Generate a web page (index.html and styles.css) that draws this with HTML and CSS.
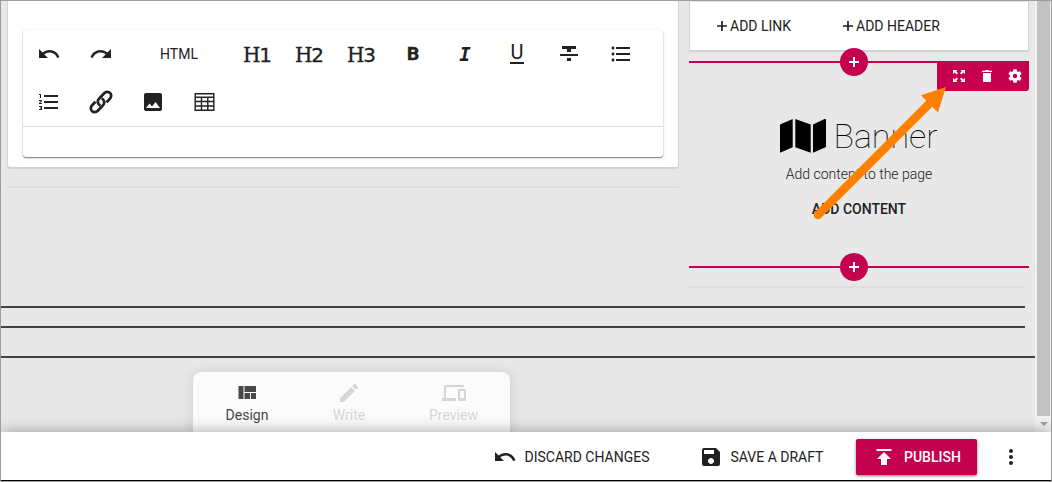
FILE: index.html
```html
<!DOCTYPE html>
<html lang="en">
<head>
<meta charset="utf-8">
<title>Page editor</title>
<link rel="stylesheet" href="styles.css">
</head>
<body>
<div class="frame">
  <div class="workspace">
    <main class="canvas">
      <div class="columns">
        <section class="main-col">
          <div class="card page-card">
            <div class="editor">
              <div class="tools">
                <span class="tool"><svg class="icon" viewBox="0 0 24 24"><path d="M12.5 8c-2.65 0-5.05.99-6.9 2.6L2 7v9h9l-3.620-3.620c1.390-1.160 3.160-1.880 5.120-1.880 3.540 0 6.550 2.310 7.600 5.500l2.370-.78C21.080 11.030 17.150 8 12.500 8z"/></svg></span>
                <span class="tool"><svg class="icon" viewBox="0 0 24 24"><path d="M18.4 10.6C16.550 8.990 14.150 8 11.500 8c-4.650 0-8.580 3.030-9.960 7.220L3.900 16c1.050-3.190 4.050-5.500 7.600-5.500 1.950 0 3.730.72 5.120 1.880L13 16h9V7l-3.600 3.600z"/></svg></span>
                <span class="tool wide">HTML</span>
                <span class="tool heading">H<span class="level">1</span></span>
                <span class="tool heading">H<span class="level">2</span></span>
                <span class="tool heading">H<span class="level">3</span></span>
                <span class="tool bold">B</span>
                <span class="tool italic">I</span>
                <span class="tool"><span class="underline">U</span></span>
                <span class="tool"><svg class="icon" viewBox="0 0 24 24"><path d="M10 19h4v-3h-4v3zM5 4v3h5v3h4V7h5V4H5zM3 14h18v-2H3v2z"/></svg></span>
                <span class="tool"><svg class="icon" viewBox="0 0 24 24"><path d="M4 10.500c-.83 0-1.500.67-1.500 1.500s.67 1.500 1.500 1.500 1.500-.67 1.500-1.500-.67-1.500-1.500-1.500zm0-6c-.83 0-1.500.67-1.500 1.500S3.170 7.500 4 7.500 5.500 6.830 5.500 6 4.830 4.500 4 4.500zm0 12c-.83 0-1.500.68-1.500 1.500s.68 1.500 1.500 1.500 1.500-.68 1.500-1.500-.67-1.500-1.500-1.500zM7 19h14v-2H7v2zm0-6h14v-2H7v2zm0-8v2h14V5H7z"/></svg></span>
                <span class="tool"><svg class="icon" viewBox="0 0 24 24"><path d="M2 17h2v.5H3v1h1v.5H2v1h3v-4H2v1zm1-9h1V4H2v1h1v3zm-1 3h1.800L2 13.100v.9h3v-1H3.200L5 10.900V10H2v1zm5-6v2h14V5H7zm0 14h14v-2H7v2zm0-6h14v-2H7v2z"/></svg></span>
                <span class="tool"><svg class="icon link" viewBox="0 0 24 24"><path d="M11.300 15.600C8.300 13.800 8 10.700 10 8.700L15.200 3.300C17 1.500 19.500 1.600 21.100 3.100S22.500 7.200 20.700 9L17.500 12.300M12.700 8.400C15.700 10.200 16 13.300 14 15.300L8.800 20.700C7 22.500 4.500 22.400 2.900 20.900S1.500 16.800 3.300 15L6.500 11.700"/></svg></span>
                <span class="tool"><svg class="icon" viewBox="0 0 24 24"><path d="M21 19V5c0-1.100-.9-2-2-2H5c-1.100 0-2 .9-2 2v14c0 1.100.9 2 2 2h14c1.100 0 2-.9 2-2zM8.500 13.500l2.500 3.010L14.500 12l4.500 6H5l3.500-4.500z"/></svg></span>
                <span class="tool"><svg class="icon table" viewBox="0 0 24 24"><path d="M2.200 3.700h18.600v16.600H2.200zM2.200 7.200h18.600M2.200 11.500h18.600M2.200 16h18.600M8.500 7v13M14.800 7v13"/></svg></span>
              </div>
              <div class="entry"></div>
            </div>
          </div>
          <hr class="soft">
        </section>
        <aside class="side-col">
          <div class="card links-card">
            <span class="add"><svg class="plus" viewBox="0 0 10 10"><path d="M5 0v10M0 5h10"/></svg>ADD LINK</span>
            <span class="add"><svg class="plus" viewBox="0 0 10 10"><path d="M5 0v10M0 5h10"/></svg>ADD HEADER</span>
          </div>
          <div class="widget">
            <span class="dot top"><svg class="plus" viewBox="0 0 10 10"><path d="M5 0v10M0 5h10"/></svg></span>
            <div class="widget-bar">
              <svg viewBox="0 0 14 14"><path d="M1 1h4.500L4.200 2.300 6 4.100 4.700 5.400 2.700 3.600 1 5zM13 1v4l-1.700-1.400-2 1.800L8 4.100l1.800-1.800L8.500 1zM1 13V9l1.700 1.400 2-1.800L6 9.900l-1.800 1.800L5.500 13zM13 13H8.500l1.300-1.300L8 9.900l1.300-1.300 2 1.800L13 9z"/></svg>
              <svg viewBox="0 0 14 14"><path d="M3 12c0 .6.500 1 1 1h6c.6 0 1-.4 1-1V4H3zM2 1.800h2.800L5.500 1h3l.7.800H12V3H2z"/></svg>
              <svg class="gear" viewBox="2 2 20 20"><path d="M19.140 12.940c.04-.3.060-.61.060-.94 0-.32-.02-.64-.07-.94l2.030-1.580c.18-.14.23-.41.12-.61l-1.920-3.320c-.12-.22-.37-.29-.59-.22l-2.390.96c-.5-.38-1.030-.7-1.620-.94l-.36-2.540c-.04-.24-.24-.41-.48-.41h-3.840c-.24 0-.43.17-.47.41l-.36 2.540c-.59.24-1.130.57-1.620.94l-2.390-.96c-.22-.08-.47 0-.59.22L2.740 8.870c-.12.21-.08.47.12.61l2.030 1.580c-.05.3-.09.63-.09.94s.02.64.07.94l-2.030 1.580c-.18.14-.23.41-.12.61l1.920 3.320c.12.22.37.29.59.22l2.390-.96c.5.38 1.030.7 1.620.94l.36 2.540c.05.24.24.41.48.41h3.840c.24 0 .44-.17.47-.41l.36-2.540c.59-.24 1.130-.56 1.620-.94l2.390.96c.22.08.47 0 .59-.22l1.920-3.320c.12-.22.07-.47-.12-.61l-2.010-1.580zM12 15.200a3.200 3.200 0 1 1 0-6.400 3.200 3.200 0 0 1 0 6.400z"/></svg>
            </div>
            <div class="banner"><svg class="map" viewBox="0 0 46 36"><path d="M0 6.500 12.700 1v28.200L0 34.700zM15.300 1 30.700 6.500v28.200l-15.400-5.500zM33 6.500l11.500-5.400c.8-.3 1.500 0 1.500 1v27L33 34.700z"/></svg><span>Banner</span></div>
            <p class="hint">Add content to the page</p>
            <span class="add-content">ADD CONTENT</span>
            <span class="dot bottom"><svg class="plus" viewBox="0 0 10 10"><path d="M5 0v10M0 5h10"/></svg></span>
          </div>
          <hr class="soft side">
        </aside>
      </div>
      <hr class="dark first">
      <hr class="dark second">
      <hr class="dark full">
    </main>
    <div class="scrollbar"><div class="thumb"></div><div class="down"></div></div>
    <nav class="modes">
      <span class="mode active"><svg viewBox="0 0 24 24"><path d="M3.500 5h5v13h-5zM9.500 5H21v6H9.500zM9.500 12H15v6H9.500zM16 12h5v6h-5z"/></svg>Design</span>
      <span class="mode"><svg viewBox="0 0 24 24"><path d="M3 17.250V21h3.750L17.810 9.940l-3.750-3.750L3 17.250zM20.710 7.040a.996.996 0 0 0 0-1.410l-2.340-2.340a.996.996 0 0 0-1.410 0l-1.830 1.830 3.750 3.750 1.830-1.830z"/></svg>Write</span>
      <span class="mode"><svg viewBox="0 0 24 24"><path d="M4 6h18V4H4c-1.100 0-2 .9-2 2v11H0v3h14v-3H4V6zm19 2h-6c-.55 0-1 .45-1 1v10c0 .55.450 1 1 1h6c.55 0 1-.45 1-1V9c0-.55-.45-1-1-1zm-1 9h-4v-7h4v7z"/></svg>Preview</span>
    </nav>
  </div>
  <footer class="actions">
    <span class="action discard"><svg class="icon" viewBox="0 0 24 24"><path d="M12.500 8c-2.650 0-5.050.99-6.900 2.600L2 7v9h9l-3.620-3.620c1.390-1.160 3.160-1.880 5.120-1.880 3.540 0 6.550 2.310 7.600 5.500l2.370-.78C21.080 11.030 17.150 8 12.500 8z"/></svg>DISCARD CHANGES</span>
    <span class="action save"><svg class="icon" viewBox="0 0 24 24"><path d="M17 3H5a2 2 0 0 0-2 2v14a2 2 0 0 0 2 2h14c1.100 0 2-.9 2-2V7l-4-4zm-5 16c-1.660 0-3-1.340-3-3s1.340-3 3-3 3 1.340 3 3-1.340 3-3 3zm3-10H5V5h10v4z"/></svg>SAVE A DRAFT</span>
    <span class="action publish"><svg class="icon" viewBox="0 0 24 24"><path d="M4.500 4v2h15V4h-15zM5 14h4v6h6v-6h4l-7-7-7 7z"/></svg>PUBLISH</span>
    <svg class="icon more" viewBox="0 0 24 24"><circle cx="12" cy="6" r="2"/><circle cx="12" cy="12" r="2"/><circle cx="12" cy="18" r="2"/></svg>
  </footer>
  <svg class="pointer" viewBox="0 0 140 140"><path class="shaft" d="M9 130 122 17"/><path d="M137 2 112 10.300l5.500 5.600 6 6 5.500 5.600z"/></svg>
</div>
</body>
</html>
```

FILE: styles.css
```css
* { box-sizing: border-box; }
body { margin: 0; font: 14px/20px Roboto, "Liberation Sans", sans-serif; color: #212121; }
svg { display: block; flex: none; fill: currentColor; }
hr { margin: 0; border: 0; height: 2px; }
.icon { width: 24px; height: 24px; }

.frame { position: relative; width: 1052px; height: 482px; border: 1px solid #9d9d9d; overflow: hidden; }
.workspace { position: relative; display: flex; height: 431px; background: #e8e8e8; overflow: hidden; }
.canvas { width: 1034px; }
.columns { display: flex; height: 305px; }
.main-col { width: 672px; margin: 0 10px 0 6px; }
.side-col { width: 340px; padding-top: 1px; }
.card { background: #fff; margin: 0 1px; box-shadow: 0 1px 1px 1px #d3d3d3; }
.page-card { height: 166px; padding: 29px 15px 0; border-radius: 0 0 2px 2px; }
.main-col .soft { margin-top: 19px; }
.soft { background: #dfdfdf; }
.side.soft { width: 336px; margin-top: 18px; }

.editor { width: 640px; height: 127px; border-radius: 3px; box-shadow: 0 1px 1px rgba(0,0,0,.4), 0 1px 3px rgba(0,0,0,.18); }
.tools { display: flex; flex-wrap: wrap; height: 97px; border-bottom: 1px solid #dcdcdc; }
.tool { display: flex; align-items: center; justify-content: center; width: 52px; height: 48px; }
.tool.wide { width: 104px; }
.heading { font: 20px/24px "DejaVu Serif", serif; letter-spacing: -1px; -webkit-text-stroke: .3px; padding-top: 1px; }
.level { font-family: "DejaVu Sans", sans-serif; }
.bold { font-size: 19px; font-weight: 700; padding-bottom: 1px; -webkit-text-stroke: .5px; }
.italic { font: italic bold 19px/24px "DejaVu Sans Mono", monospace; padding-bottom: 1px; }
.underline { width: 14px; height: 19px; border-bottom: 2px solid; font-size: 20px; line-height: 15px; text-align: center; }
.link, .table { fill: none; stroke: currentColor; }
.link { stroke-width: 2.7; }
.table { stroke-width: 1.4; }

.links-card { display: flex; height: 48px; padding: 14px 0 0 27px; }
.add { display: flex; align-items: center; height: 20px; width: 126px; white-space: nowrap; }
.plus { width: 10px; height: 10px; stroke: currentColor; stroke-width: 1.7; margin-right: 3px; }

.widget { position: relative; height: 207px; margin-top: 11px; border: solid #c5004f; border-width: 2px 0; display: flex; flex-direction: column; align-items: center; padding-top: 51px; }
.dot { position: absolute; left: 151px; display: flex; align-items: center; justify-content: center; width: 28px; height: 28px; border-radius: 50%; background: #c5004f; color: #fff; }
.dot.top { top: -15px; }
.dot.bottom { bottom: -15px; }
.dot .plus { margin: 0; stroke-width: 2; }
.widget-bar { position: absolute; top: 0; right: 0; display: flex; align-items: center; gap: 14px; width: 92px; height: 28px; padding: 0 7px 2px 15px; border-radius: 0 0 3px 3px; background: #c5004f; color: #fff; }
.widget-bar svg { width: 14px; height: 14px; }
.banner { display: flex; align-items: center; gap: 7px; height: 44px; font-size: 34px; font-weight: 100; line-height: 44px; color: #000; }
.map { width: 46px; height: 36px; }
.hint { margin: 6px 0 15px; font-weight: 300; }
.add-content { font-weight: 500; }

.dark { width: 1024px; background: #424242; }
.second { margin-top: 18px; }
.full { width: 1034px; margin-top: 28px; }

.scrollbar { width: 16px; padding: 0 1px 0 2px; background: #f1f1f1; }
.thumb { height: 415px; background: #c1c1c1; }
.down { width: 8px; margin: 6px auto 0; border: solid transparent; border-width: 4px 4px 0; border-top-color: #a0a0a0; }

.modes { position: absolute; left: 192px; top: 371px; display: flex; align-items: flex-start; width: 317px; height: 70px; padding-top: 9px; border-radius: 8px 8px 0 0; background: #fbfbfb; box-shadow: 0 0 14px rgba(0,0,0,.12); color: #d6d6d6; }
.mode { display: flex; flex-direction: column; align-items: center; width: 105px; }
.mode:first-child { width: 108px; }
.mode:nth-child(2) { width: 96px; }
.mode:nth-child(3) { width: 113px; }
.mode svg { width: 24px; height: 24px; }
.active { color: #484848; }

.actions { position: relative; display: flex; align-items: center; height: 49px; padding-top: 1px; background: #fff; border-bottom: 1px solid #000; box-shadow: 0 -1px 14px rgba(0,0,0,.3); }
.action { display: flex; align-items: center; white-space: nowrap; }
.discard { width: 206px; margin-left: 491.500px; gap: 8px; }
.save { width: 157.500px; gap: 8px; }
.publish { width: 121px; height: 36px; padding-left: 16px; gap: 8px; border-radius: 2px; background: #c5004f; color: #fff; font-weight: 500; box-shadow: 0 1px 3px rgba(0,0,0,.5); }
.more { margin-left: 22px; }

.pointer { position: absolute; left: 808px; top: 84px; width: 140px; height: 140px; fill: #ff8000; }
.shaft { stroke: #ff8000; stroke-width: 8.500; stroke-linecap: round; }
```
